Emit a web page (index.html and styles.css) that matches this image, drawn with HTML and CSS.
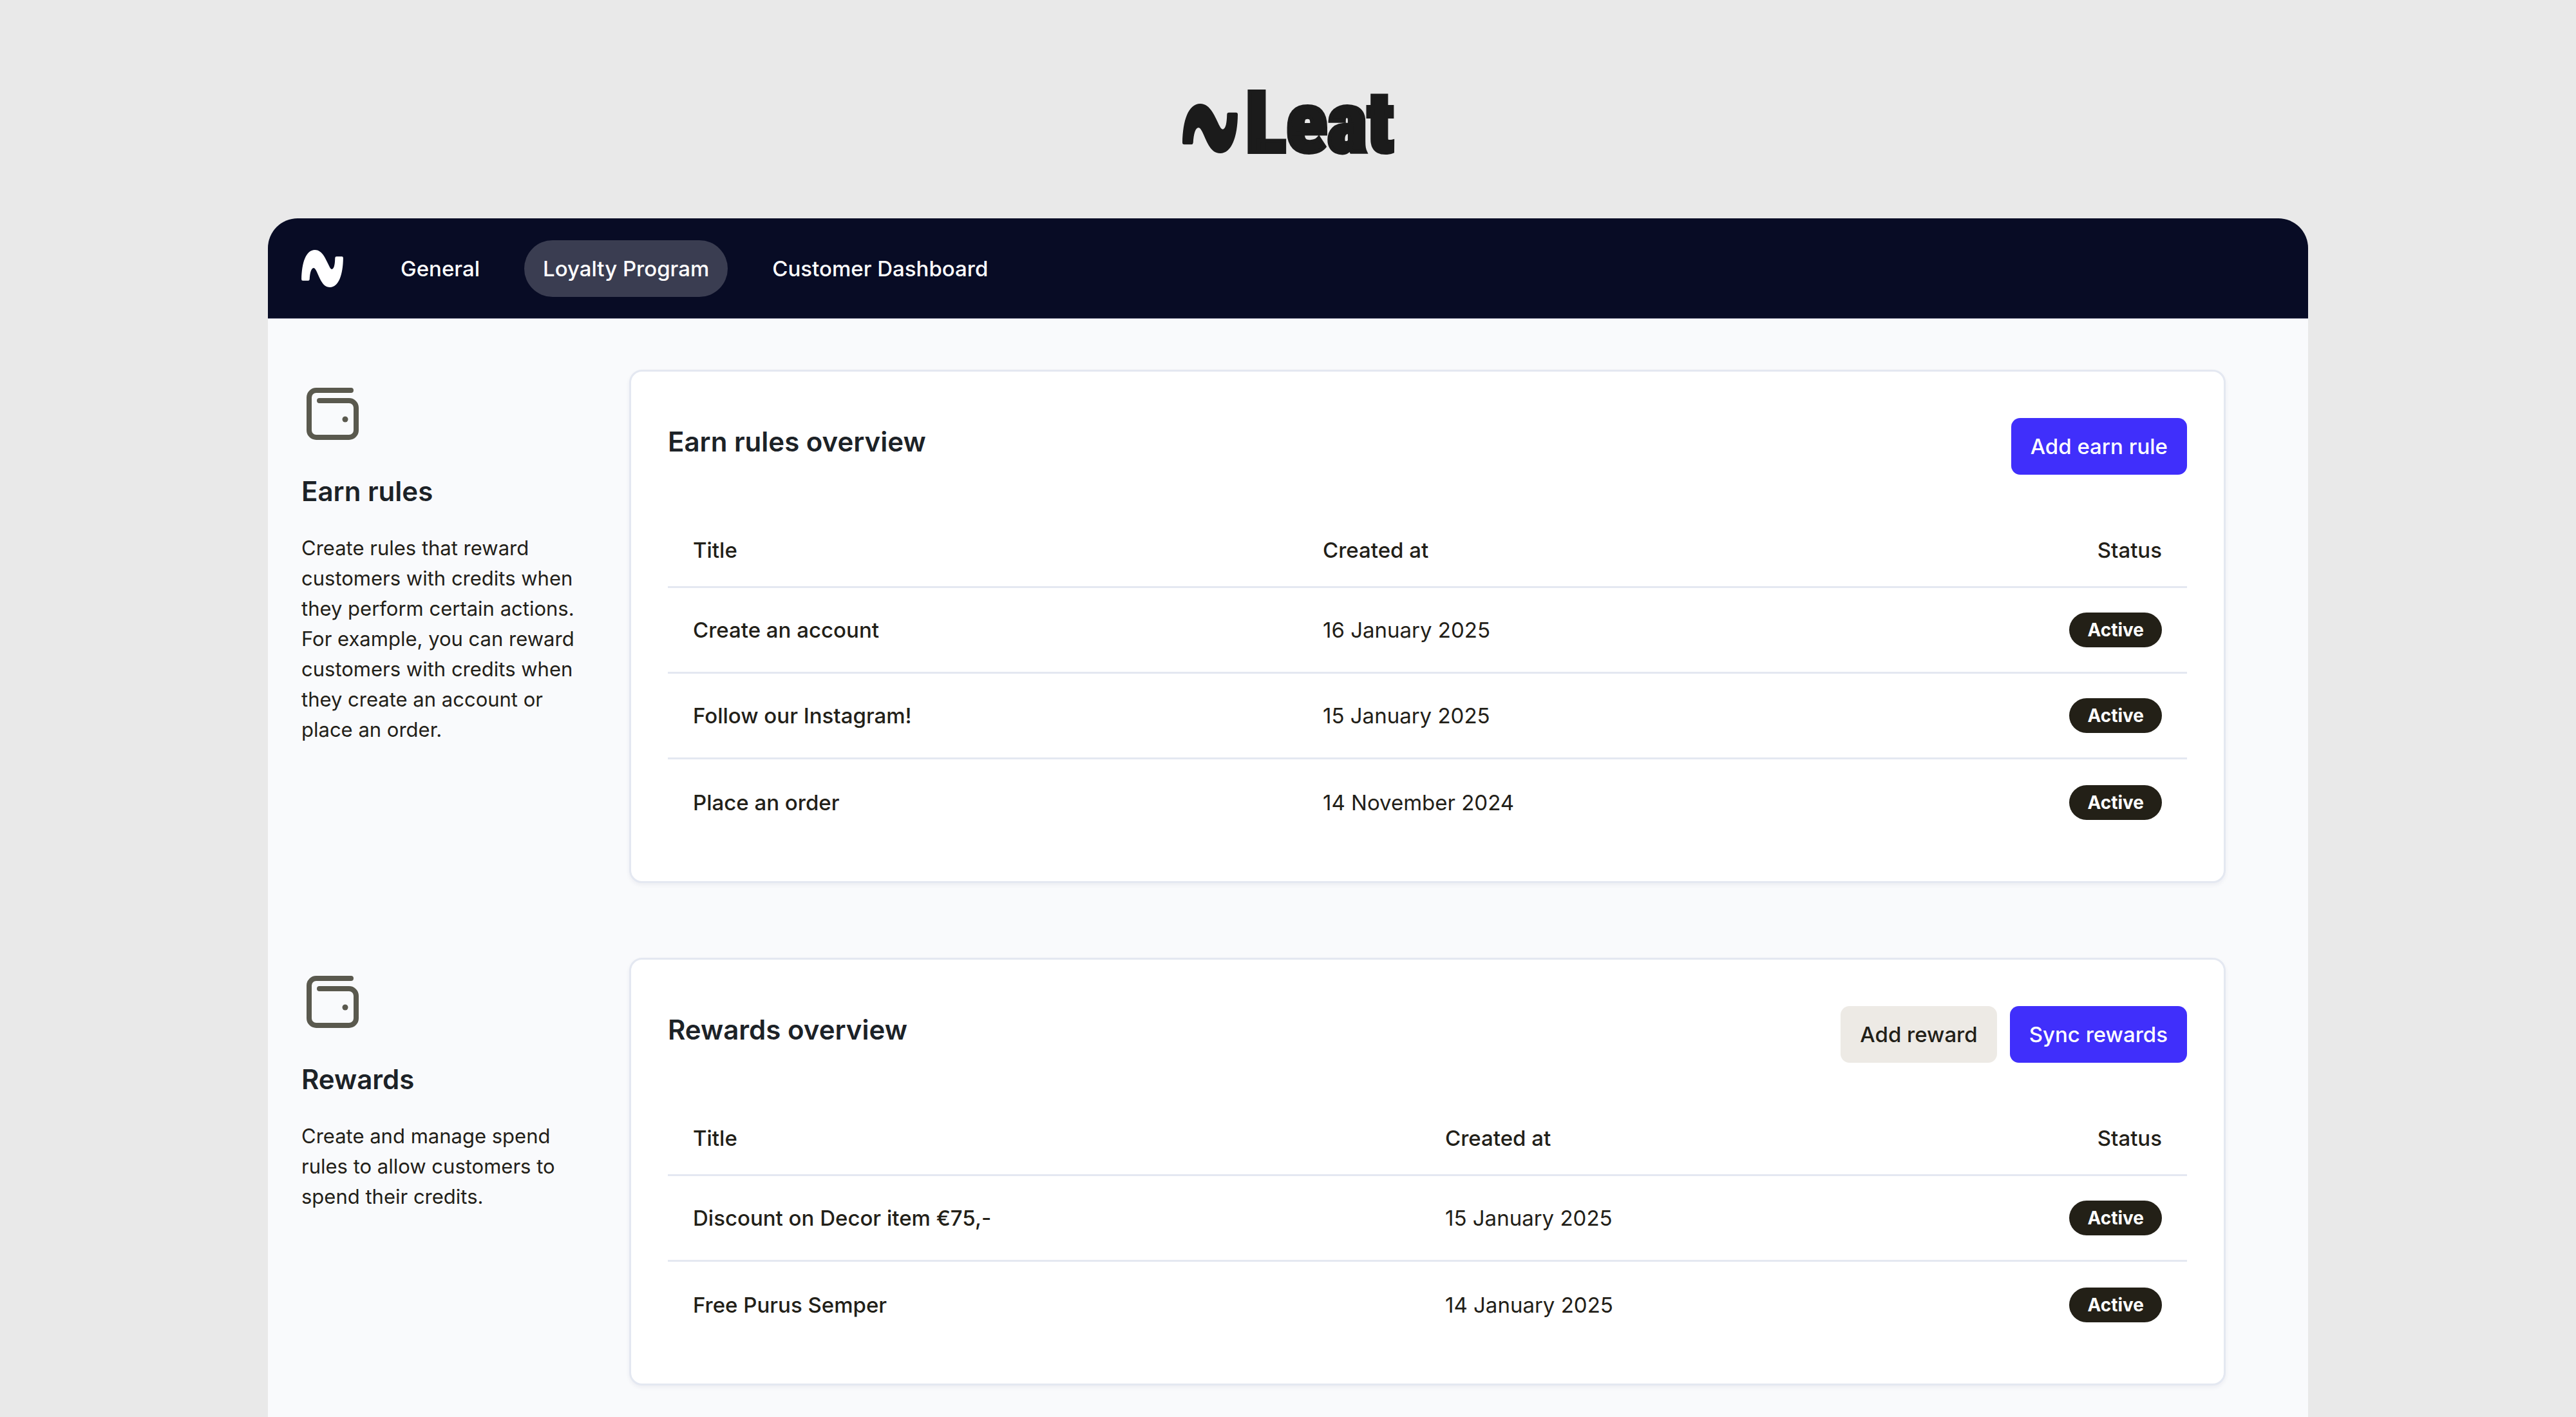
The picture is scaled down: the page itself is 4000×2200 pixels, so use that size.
FILE: index.html
```html
<!DOCTYPE html>
<html lang="en">
<head>
<meta charset="utf-8">
<title>Leat – Loyalty Program</title>
<link rel="stylesheet" href="styles.css">
</head>
<body>
<svg class="defs" width="0" height="0" aria-hidden="true">
  <symbol id="wave" viewBox="81 153 257 230">
    <path d="M89 342Q81 342 81 333C83 232 108 153 164 153C212 153 233 216 254 257C260 269 265 273 271 271C283 266 287 240 288 203Q288 194 297 194H330Q338 194 338 203C337 308 309 383 257 383C207 383 192 318 171 279C165 267 160 264 155 264C142 265 133 292 131 334Q130 342 123 342Z"/>
  </symbol>
  <symbol id="wallet" viewBox="0 0 81 81">
    <path d="M69 4H15A11 11 0 0 0 4 15V66A11 11 0 0 0 15 77H66A11 11 0 0 0 77 66V31A11 11 0 0 0 66 20H20" fill="none" stroke="currentColor" stroke-width="8" stroke-linecap="round"/>
    <circle cx="60" cy="49" r="4.5" fill="currentColor"/>
  </symbol>
</svg>

<div class="brand">
  <svg class="brand-mark" aria-hidden="true"><use href="#wave"/></svg>
  <span class="brand-name">Leat</span>
</div>

<div class="app">
  <header class="topbar">
    <a class="home" href="#" aria-label="Leat home"><svg class="home-mark" aria-hidden="true"><use href="#wave"/></svg></a>
    <nav class="nav">
      <a class="nav-link" href="#">General</a>
      <a class="nav-link active" href="#" aria-current="page">Loyalty Program</a>
      <a class="nav-link" href="#">Customer Dashboard</a>
    </nav>
  </header>

  <main class="content">
    <section class="section">
      <div class="intro">
        <svg class="intro-icon" aria-hidden="true"><use href="#wallet"/></svg>
        <h2 class="heading">Earn rules</h2>
        <p class="intro-text">Create rules that reward customers with credits when they perform certain actions. For example, you can reward customers with credits when they create an account or place an order.</p>
      </div>
      <div class="card">
        <div class="card-head">
          <h3 class="heading card-title">Earn rules overview</h3>
          <div class="actions"><button class="button primary" type="button">Add earn rule</button></div>
        </div>
        <table class="table earn">
          <thead>
            <tr><th class="col-title" scope="col">Title</th><th scope="col">Created at</th><th class="col-status" scope="col">Status</th></tr>
          </thead>
          <tbody>
            <tr><th scope="row">Create an account</th><td>16 January 2025</td><td class="col-status"><span class="badge">Active</span></td></tr>
            <tr><th scope="row">Follow our Instagram!</th><td>15 January 2025</td><td class="col-status"><span class="badge">Active</span></td></tr>
            <tr><th scope="row">Place an order</th><td>14 November 2024</td><td class="col-status"><span class="badge">Active</span></td></tr>
          </tbody>
        </table>
      </div>
    </section>

    <section class="section">
      <div class="intro">
        <svg class="intro-icon" aria-hidden="true"><use href="#wallet"/></svg>
        <h2 class="heading">Rewards</h2>
        <p class="intro-text">Create and manage spend rules to allow customers to spend their credits.</p>
      </div>
      <div class="card">
        <div class="card-head">
          <h3 class="heading card-title">Rewards overview</h3>
          <div class="actions">
            <button class="button secondary" type="button">Add reward</button>
            <button class="button primary" type="button">Sync rewards</button>
          </div>
        </div>
        <table class="table rewards">
          <thead>
            <tr><th class="col-title" scope="col">Title</th><th scope="col">Created at</th><th class="col-status" scope="col">Status</th></tr>
          </thead>
          <tbody>
            <tr><th scope="row">Discount on Decor item €75,-</th><td>15 January 2025</td><td class="col-status"><span class="badge">Active</span></td></tr>
            <tr><th scope="row">Free Purus Semper</th><td>14 January 2025</td><td class="col-status"><span class="badge">Active</span></td></tr>
          </tbody>
        </table>
      </div>
    </section>
  </main>
</div>
</body>
</html>
```
FILE: styles.css
```css
* { box-sizing: border-box; }

body {
  margin: 0;
  min-height: 100vh;
  display: flex;
  flex-direction: column;
  background: #e9e9e9;
  color: #222018;
  font-family: Inter, "Liberation Sans", sans-serif;
  font-size: 33px;
  line-height: 48px;
}

.defs { position: absolute; }

.brand {
  display: flex;
  justify-content: center;
  gap: 12px;
  height: 339px;
  padding-top: 116px;
  color: #1b1b1b;
}

.brand-mark {
  width: 86px;
  height: 77px;
  margin-top: 45px;
  fill: currentColor;
}

.brand-name {
  font-family: "Roboto Condensed", "Open Sans Condensed", "Noto Sans Condensed", "Liberation Sans", sans-serif;
  font-weight: 900;
  font-size: 132px;
  line-height: 150px;
  -webkit-text-stroke: 6px currentColor;
}

.app {
  flex: 1;
  width: 79.2%;
  margin: 0 auto;
  border-radius: 46px 46px 0 0;
  overflow: hidden;
  background: #f9fafc;
}

.topbar {
  display: flex;
  align-items: center;
  gap: 60px;
  height: 156px;
  padding: 0 52px;
  background: #080c25;
  border-bottom: 1px solid #8f91a3;
}

.home { display: flex; }

.home-mark {
  width: 65px;
  height: 58px;
  fill: #fff;
}

.nav {
  display: flex;
  gap: 40px;
}

.nav-link {
  padding: 20px 29px;
  border-radius: 44px;
  color: #fff;
  font-weight: 500;
  text-decoration: none;
}

.nav-link.active { background: #3a3d51; }

.content {
  display: flex;
  flex-direction: column;
  gap: 116px;
  padding: 79px 128px 50px 52px;
}

.section {
  display: grid;
  grid-template-columns: 440px 1fr;
  gap: 69px;
  align-items: start;
}

.intro { padding-top: 28px; }

.intro-icon {
  display: block;
  width: 81px;
  height: 81px;
  margin: 0 0 52px 8px;
  color: #5a594e;
}

.heading {
  margin: 0;
  color: #1c2227;
  font-size: 42px;
  font-weight: 600;
  line-height: 56px;
}

.intro-text {
  margin: 36px 0 0;
  font-size: 31px;
  line-height: 47px;
}

.card {
  padding: 72px 57px 56px;
  background: #fff;
  border: 3px solid #e4e8f1;
  border-radius: 20px;
  box-shadow: 0 3px 6px rgba(30, 40, 80, 0.06);
}

.card-head {
  display: flex;
  justify-content: space-between;
  align-items: flex-start;
  margin-bottom: 60px;
}

.card-title { line-height: 74px; }

.actions {
  display: flex;
  gap: 20px;
}

.button {
  height: 88px;
  padding: 0 30px;
  border: 0;
  border-radius: 14px;
  font: inherit;
  font-weight: 500;
}

.primary {
  background: #402ffb;
  color: #fff;
}

.secondary {
  background: #edeae5;
  color: #222018;
}

.table {
  width: 100%;
  table-layout: fixed;
  border-collapse: separate;
  border-spacing: 0;
}

.table th,
.table td {
  height: 133px;
  padding: 0 39px;
  text-align: left;
  vertical-align: middle;
}

.table th { font-weight: 500; }

.table thead th { height: 116px; }

.table thead th,
.table tbody tr:not(:last-child) > * { border-bottom: 3px solid #e4e8f1; }

.earn .col-title { width: 978px; }
.rewards .col-title { width: 1168px; }

.table .col-status { text-align: right; }

.badge {
  display: inline-block;
  padding: 0 28px;
  border-radius: 27px;
  background: #232017;
  color: #fff;
  font-size: 28px;
  font-weight: 700;
  line-height: 54px;
  vertical-align: middle;
}
```
